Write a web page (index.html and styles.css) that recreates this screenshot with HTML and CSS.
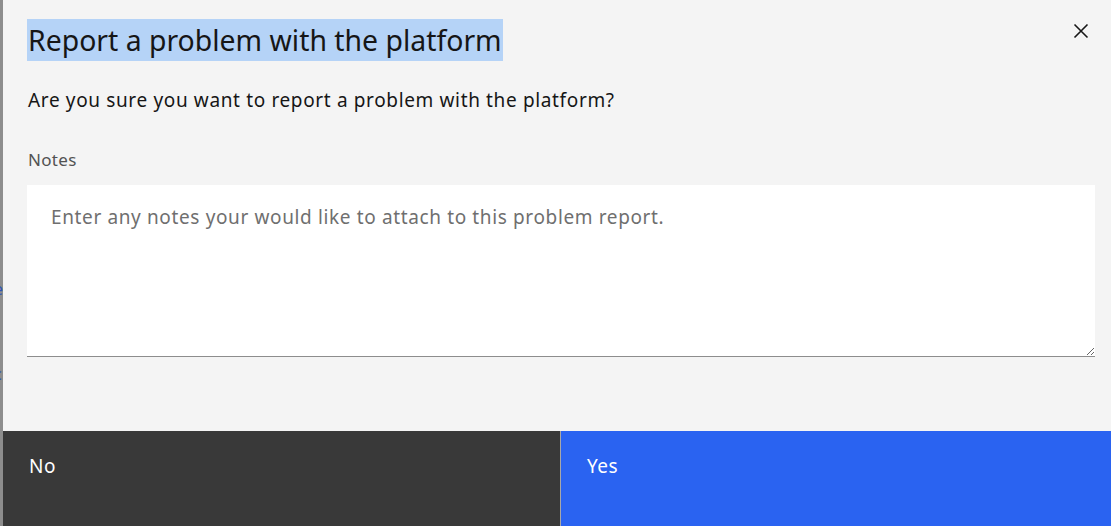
FILE: index.html
```html
<!DOCTYPE html>
<html lang="en">
<head>
<meta charset="utf-8">
<title>Report a problem with the platform</title>
<link rel="stylesheet" href="styles.css">
</head>
<body>
<div class="page">
  <div class="backdrop">
    <span class="frag frag-1">e</span>
    <span class="frag frag-2">c</span>
  </div>
  <div class="modal" role="dialog" aria-labelledby="modal-title">
    <header class="modal-header">
      <h2 class="title" id="modal-title"><span class="title-sel">Report a problem with the platform</span></h2>
      <button class="close" type="button" aria-label="Close">
        <svg width="16" height="16" viewBox="0 0 16 16" aria-hidden="true"><path d="M1.5 1.5 L14.5 14.5 M14.5 1.5 L1.5 14.5" stroke="#161616" stroke-width="1.6" fill="none"/></svg>
      </button>
    </header>
    <p class="desc">Are you sure you want to report a problem with the platform?</p>
    <label class="label" for="notes">Notes</label>
    <textarea class="notes" id="notes" placeholder="Enter any notes your would like to attach to this problem report."></textarea>
    <div class="footer">
      <button class="btn btn-secondary" type="button">No</button>
      <button class="btn btn-primary" type="button">Yes</button>
    </div>
  </div>
</div>
</body>
</html>
```
FILE: styles.css
```css
html, body {
  margin: 0;
  padding: 0;
  height: 526px;
  overflow: hidden;
}
body {
  font-family: "Noto Sans", "Open Sans", sans-serif;
  color: #161616;
}
.page {
  display: flex;
  height: 526px;
}
.backdrop {
  width: 3px;
  flex: none;
  background: #8d8d8d;
  overflow: hidden;
  position: relative;
}
.frag {
  position: absolute;
  left: -6px;
  color: #2f55b5;
  font-size: 16px;
  line-height: 16px;
}
.frag-1 { top: 281px; }
.frag-2 { top: 366px; }
.modal {
  flex: 1;
  background: #f4f4f4;
  display: flex;
  flex-direction: column;
  padding-top: 19px;
  min-width: 0;
}
.modal-header {
  display: flex;
  justify-content: space-between;
  align-items: flex-start;
  padding: 0 14px 0 24px;
}
.title {
  margin: 0;
  font-weight: 400;
  font-size: 28.4px;
  line-height: 42px;
}
.title-sel {
  display: inline-block;
  background: #b5d3f7;
  padding: 0 1px;
  height: 42px;
}
.close {
  border: 0;
  background: transparent;
  padding: 0;
  width: 32px;
  height: 32px;
  margin-top: -4px;
  display: flex;
  align-items: center;
  justify-content: center;
  cursor: pointer;
}
.desc {
  margin: 27px 0 0 0;
  padding-left: 25px;
  font-size: 19px;
  letter-spacing: 0.64px;
  line-height: 24px;
}
.label {
  margin-top: 38px;
  padding-left: 25px;
  font-size: 17px;
  letter-spacing: 0.3px;
  line-height: 20px;
  color: #525252;
}
.notes {
  margin: 15px 0 0 24px;
  width: 1068px;
  height: 172px;
  box-sizing: border-box;
  border: 0;
  border-bottom: 1px solid #8d8d8d;
  background: #ffffff;
  padding: 20px 24px;
  font-family: inherit;
  font-size: 19px;
  letter-spacing: 0.63px;
  line-height: 24px;
  color: #161616;
  outline: none;
}
.notes::placeholder {
  color: #6f6f6f;
}
.footer {
  margin-top: 74px;
  display: flex;
  height: 95px;
  flex: none;
}
.btn {
  border: 0;
  margin: 0;
  padding: 24px 26px 0;
  text-align: left;
  font-family: inherit;
  font-size: 19px;
  letter-spacing: 0.5px;
  line-height: 22px;
  color: #ffffff;
  display: flex;
  align-items: flex-start;
  cursor: pointer;
}
.btn-secondary {
  width: 557px;
  flex: none;
  background: #393939;
}
.btn-primary {
  flex: 1;
  background: #2a63f1;
  border-left: 1px solid #a8a8a8;
}
```
